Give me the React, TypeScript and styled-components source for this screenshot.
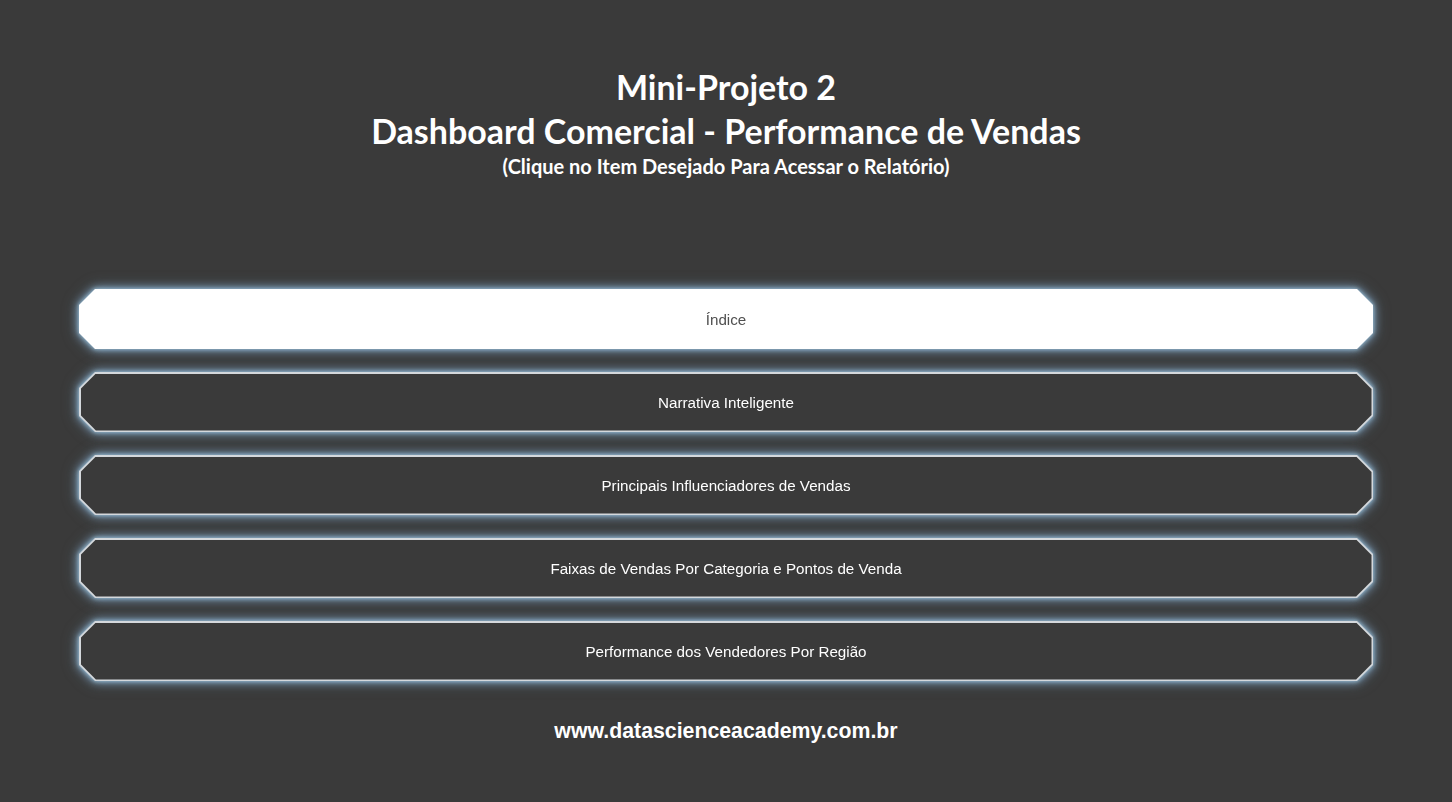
import React from "react";
import styled, { createGlobalStyle } from "styled-components";

const GlobalStyle = createGlobalStyle`
  html, body {
    margin: 0;
    padding: 0;
    background: #3a3a3a;
  }
  body {
    font-family: "Liberation Sans", Arial, sans-serif;
  }
`;

const Page = styled.div`
  width: 1452px;
  height: 802px;
  box-sizing: border-box;
  padding: 65px 79px 0;
  display: flex;
  flex-direction: column;
  align-items: stretch;
`;

const Header = styled.header`
  display: flex;
  flex-direction: column;
  align-items: center;
  color: #ffffff;
  font-family: Lato, "Open Sans", sans-serif;
  font-weight: 700;
`;

const TitleLine = styled.div`
  font-size: 34px;
  line-height: 44px;
  white-space: nowrap;
`;

const Subtitle = styled.div`
  font-size: 20px;
  line-height: 26px;
  white-space: nowrap;
`;

const Menu = styled.nav`
  margin-top: 110px;
  display: flex;
  flex-direction: column;
  gap: 23px;
`;

const octagon = `polygon(16px 0, calc(100% - 16px) 0, 100% 16px, 100% calc(100% - 16px), calc(100% - 16px) 100%, 16px 100%, 0 calc(100% - 16px), 0 16px)`;

const Glow = styled.div`
  filter: drop-shadow(0 0 2px rgba(170, 205, 230, 0.9))
    drop-shadow(0 0 4px rgba(130, 170, 200, 0.8))
    drop-shadow(0 0 6px rgba(110, 140, 165, 0.6));
`;

const Frame = styled.div<{ $active?: boolean }>`
  height: 60px;
  padding: 1.5px;
  box-sizing: border-box;
  background: ${(p) => (p.$active ? "#ffffff" : "#d4d8dc")};
  clip-path: ${octagon};
`;

const Item = styled.div<{ $active?: boolean }>`
  height: 100%;
  display: flex;
  align-items: center;
  justify-content: center;
  background: ${(p) => (p.$active ? "#ffffff" : "#3a3a3a")};
  color: ${(p) => (p.$active ? "#505050" : "#ffffff")};
  font-family: "Liberation Sans", Arial, sans-serif;
  font-size: 15.2px;
  clip-path: polygon(15.4px 0, calc(100% - 15.4px) 0, 100% 15.4px, 100% calc(100% - 15.4px), calc(100% - 15.4px) 100%, 15.4px 100%, 0 calc(100% - 15.4px), 0 15.4px);
`;

const Footer = styled.footer`
  margin-top: 38px;
  text-align: center;
  color: #ffffff;
  font-family: "Liberation Sans", Arial, sans-serif;
  font-weight: 700;
  font-size: 21.3px;
  line-height: 24px;
`;

const items = [
  "Índice",
  "Narrativa Inteligente",
  "Principais Influenciadores de Vendas",
  "Faixas de Vendas Por Categoria e Pontos de Venda",
  "Performance dos Vendedores Por Região",
];

export default function App() {
  return (
    <>
      <GlobalStyle />
      <Page>
        <Header>
          <TitleLine>Mini-Projeto 2</TitleLine>
          <TitleLine>Dashboard Comercial - Performance de Vendas</TitleLine>
          <Subtitle>(Clique no Item Desejado Para Acessar o Relatório)</Subtitle>
        </Header>
        <Menu>
          {items.map((label, i) => (
            <Glow key={label}>
              <Frame $active={i === 0}>
                <Item $active={i === 0}>{label}</Item>
              </Frame>
            </Glow>
          ))}
        </Menu>
        <Footer>www.datascienceacademy.com.br</Footer>
      </Page>
    </>
  );
}
